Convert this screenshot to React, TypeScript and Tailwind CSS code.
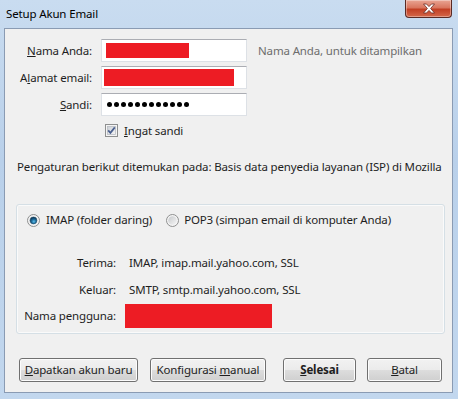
import React from "react";

// Win7 style checkbox, drawn
const CheckBox = () => (
  <svg width="13" height="13" viewBox="0 0 13 13">
    <defs>
      <linearGradient id="cbFill" x1="0" y1="0" x2="1" y2="1">
        <stop offset="0" stopColor="#cbcfd5" />
        <stop offset="1" stopColor="#f6f6f6" />
      </linearGradient>
    </defs>
    <rect x="0.5" y="0.5" width="12" height="12" fill="#f4f4f4" stroke="#8e8f8f" />
    <rect x="2.5" y="2.5" width="8" height="8" fill="url(#cbFill)" stroke="#b8bcc2" strokeWidth="0.8" />
    <path d="M3.2 6.4 L5.4 8.9 L9.8 3.4" fill="none" stroke="#4a5f8f" strokeWidth="1.7" />
  </svg>
);

const Radio = ({ checked }: { checked?: boolean }) => (
  <svg width="13" height="13" viewBox="0 0 13 13">
    <defs>
      <linearGradient id="rdRing" x1="0" y1="0" x2="1" y2="1">
        <stop offset="0" stopColor="#c7c9cc" />
        <stop offset="1" stopColor="#f5f5f5" />
      </linearGradient>
      <radialGradient id="rdDot" cx="0.55" cy="0.65" r="0.6">
        <stop offset="0" stopColor="#5fc0ec" />
        <stop offset="0.5" stopColor="#1f6f9f" />
        <stop offset="1" stopColor="#0b3a5b" />
      </radialGradient>
    </defs>
    <circle cx="6.5" cy="6.5" r="6" fill="#f4f4f4" stroke="#8e8f8f" />
    <circle cx="6.5" cy="6.5" r="4.3" fill="url(#rdRing)" />
    {checked && <circle cx="6.5" cy="6.5" r="3.4" fill="url(#rdDot)" stroke="#1b4662" strokeWidth="0.5" />}
  </svg>
);

const Input = ({ children, pad = "pl-[4px]" }: { children?: React.ReactNode; pad?: string }) => (
  <div className={`w-[146px] h-[23px] bg-white border border-[#dde1e6] border-t-[#abadb3] flex items-center ${pad}`}>
    {children}
  </div>
);

const Redact = ({ w, h }: { w: string; h: string }) => (
  <div className={`${w} ${h} bg-[#ed1c24]`} />
);

const Button = ({ w, children, bold }: { w: string; children: React.ReactNode; bold?: boolean }) => (
  <button
    className={`${w} h-[24px] rounded-[3px] border border-[#707070] bg-[linear-gradient(#f2f2f2_0%,#ebebeb_50%,#dddddd_50%,#cfcfcf_100%)] shadow-[inset_0_0_0_1px_#fcfcfc] text-[#1e1e1e] flex items-center justify-center ${bold ? "font-bold" : ""}`}
  >
    {children}
  </button>
);

const App = () => {
  return (
    <div className="w-[458px] h-[399px] bg-[linear-gradient(180deg,#c9dcf0_0%,#b9d0ea_40%,#c2d7ee_100%)] font-['Noto_Sans',sans-serif] text-[11.5px] tracking-[-0.15px] leading-[16px] text-[#1e1e1e] overflow-hidden">
      {/* title bar */}
      <div className="h-[28px] flex items-start justify-between">
        <span className="pl-[6px] pt-[6px] text-black">Setup Akun Email</span>
        <div className="mr-[6px] w-[47px] h-[18px] rounded-b-[4px] border border-t-0 border-[#5a2a24] bg-[linear-gradient(#e9a594_0%,#d9765f_45%,#c23f24_55%,#d4684a_100%)] shadow-[inset_0_0_0_1px_rgba(255,255,255,0.35)] flex items-center justify-center">
          <svg width="14" height="11" viewBox="0 0 14 11">
            <path
              d="M1.5 1 L4.5 1 L7 3.6 L9.5 1 L12.5 1 L8.6 5.5 L12.5 10 L9.5 10 L7 7.4 L4.5 10 L1.5 10 L5.4 5.5 Z"
              fill="#ffffff"
              stroke="#6b2a22"
              strokeWidth="0.8"
            />
          </svg>
        </div>
      </div>

      {/* client area */}
      <div className="ml-[4px] w-[449px] h-[365px] border border-[#8a9bb3] bg-[#f0f0f0] flex flex-col">
        <div className="mt-[10px] grid grid-cols-[87px_146px_auto] gap-y-[4px] items-center">
          <div className="text-right">
            <u>N</u>ama Anda:
          </div>
          <div className="ml-[9px]">
            <Input>
              <Redact w="w-[83px]" h="h-[15px]" />
            </Input>
          </div>
          <div className="ml-[20px] text-[#6d6d6d] whitespace-nowrap">Nama Anda, untuk ditampilkan</div>

          <div className="text-right">
            A<u>l</u>amat email:
          </div>
          <div className="ml-[9px]">
            <Input pad="pl-[2px]">
              <Redact w="w-[130px]" h="h-[17px]" />
            </Input>
          </div>
          <div />

          <div className="text-right">
            <u>S</u>andi:
          </div>
          <div className="ml-[9px]">
            <Input>
              <div className="flex gap-[2px] pl-[1px]">
                {Array.from({ length: 12 }).map((_, i) => (
                  <span key={i} className="w-[5px] h-[5px] rounded-full bg-black" />
                ))}
              </div>
            </Input>
          </div>
          <div />
        </div>

        <div className="mt-[8px] ml-[100px] flex items-center gap-[6px] h-[13px]">
          <CheckBox />
          <span>
            <u>I</u>ngat sandi
          </span>
        </div>

        <div className="mt-[22px] ml-[12px] whitespace-nowrap">
          Pengaturan berikut ditemukan pada: Basis data penyedia layanan (ISP) di Mozilla
        </div>

        <div className="mt-[29px] ml-[11px] w-[429px] rounded-[3px] border border-[#d5dfe5] shadow-[inset_0_0_0_1px_#fafafa] pt-[7px] pb-[5px]">
          <div className="pl-[10px] h-[16px] flex items-center">
            <Radio checked />
            <span className="ml-[6px]">IMAP (folder daring)</span>
            <span className="ml-[14px] flex">
              <Radio />
            </span>
            <span className="ml-[5px]">POP3 (simpan email di komputer Anda)</span>
          </div>

          <div className="pl-[9px] mt-[27px] grid grid-cols-[90px_auto] gap-x-[13px] items-center">
            <div className="text-right h-[16px]">Terima:</div>
            <div className="h-[16px]">IMAP, imap.mail.yahoo.com, SSL</div>
          </div>
          <div className="pl-[9px] mt-[11px] grid grid-cols-[90px_auto] gap-x-[13px] items-center">
            <div className="text-right h-[16px]">Keluar:</div>
            <div className="h-[16px]">SMTP, smtp.mail.yahoo.com, SSL</div>
          </div>
          <div className="pl-[9px] mt-[6px] flex items-center">
            <div className="w-[90px] flex justify-end whitespace-nowrap">Nama pengguna:</div>
            <div className="ml-[9px]">
              <Redact w="w-[147px]" h="h-[24px]" />
            </div>
          </div>
        </div>

        <div className="mt-[24px] pl-[14px] flex">
          <Button w="w-[119px]">
            <span>
              <u>D</u>apatkan akun baru
            </span>
          </Button>
          <div className="ml-[12px]">
            <Button w="w-[116px]">
              <span>
                Konfigurasi <u>m</u>anual
              </span>
            </Button>
          </div>
          <div className="ml-[17px]">
            <Button w="w-[73px]" bold>
              <span>
                <u>S</u>elesai
              </span>
            </Button>
          </div>
          <div className="ml-[11px]">
            <Button w="w-[75px]">
              <span>
                <u>B</u>atal
              </span>
            </Button>
          </div>
        </div>
      </div>
    </div>
  );
};

export default App;
